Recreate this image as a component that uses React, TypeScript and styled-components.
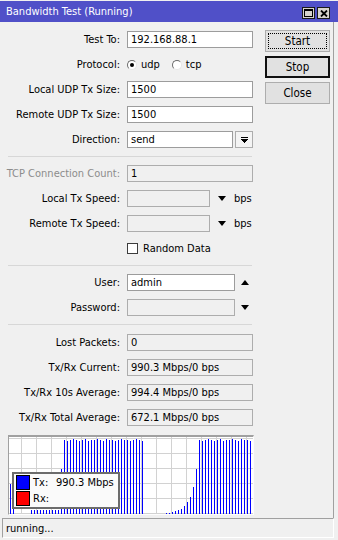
import React from 'react';
import styled, { createGlobalStyle } from 'styled-components';

const FONT = `"DejaVu Sans Condensed", "Liberation Sans Narrow", "Liberation Sans", Arial, sans-serif`;

const Global = createGlobalStyle`
  html, body { margin: 0; padding: 0; background: #f0f0f0; }
  body { font-family: ${FONT}; font-size: 11px; color: #000; }
  * { box-sizing: border-box; }
`;

const Window = styled.div`
  width: 338px;
  height: 540px;
  display: flex;
  flex-direction: column;
  background: #f0f0f0;
  overflow: hidden;
`;

const TitleBar = styled.div`
  margin-top: 1px;
  height: 21px;
  background: #5050c8;
  display: flex;
  align-items: center;
  padding: 0 8px 0 6px;
  color: #fff;
`;

const Title = styled.div`
  flex: 1;
  font-size: 11px;
  padding-bottom: 1px;
`;

const TitleBtns = styled.div`
  display: flex;
  gap: 2px;
  align-self: flex-end;
  margin-bottom: 3px;
`;

const TitleBtn = styled.div`
  width: 13px;
  height: 12px;
  background: #d6d3cc;
  border: 1px solid #1a1a1a;
  display: flex;
  align-items: center;
  justify-content: center;
`;

const Body = styled.div`
  width: 334px;
  flex: 1;
  border-right: 1px solid #a0a0a0;
  display: flex;
  flex-direction: column;
`;

const Main = styled.div`
  display: flex;
  padding-top: 8px;
`;

const FormCol = styled.div`
  width: 253px;
  padding-top: 1px;
  display: flex;
  flex-direction: column;
`;

const ButtonCol = styled.div`
  margin-left: 12px;
  width: 65px;
  display: flex;
  flex-direction: column;
  gap: 4px;
`;

const Button = styled.div<{ $variant?: 'focus' | 'default' | 'plain' }>`
  position: relative;
  height: 22px;
  background: #e1e1e1;
  border: ${(p) => (p.$variant === 'default' ? '2px solid #111' : '1px solid #adadad')};
  display: flex;
  align-items: center;
  justify-content: center;
  font-size: 11.5px;
  &::after {
    content: '';
    display: ${(p) => (p.$variant === 'focus' ? 'block' : 'none')};
    position: absolute;
    inset: 2px;
    border: 1px dotted #000;
  }
`;

const Row = styled.div<{ $gap?: number }>`
  display: grid;
  grid-template-columns: 120px 126px;
  column-gap: 7px;
  align-items: center;
  height: 17px;
  margin-bottom: ${(p) => p.$gap ?? 8}px;
`;

const Label = styled.div<{ $disabled?: boolean }>`
  text-align: right;
  white-space: nowrap;
  color: ${(p) => (p.$disabled ? '#8c8c8c' : '#000')};
`;

const Field = styled.div`
  display: flex;
  align-items: center;
  height: 17px;
`;

const Input = styled.div<{ $disabled?: boolean; $w?: number }>`
  height: 17px;
  width: ${(p) => (p.$w ? `${p.$w}px` : '100%')};
  border: 1px solid ${(p) => (p.$disabled ? '#adadad' : '#9c9c9c')};
  background: ${(p) => (p.$disabled ? '#f0f0f0' : '#fff')};
  padding: 0 3px;
  display: flex;
  align-items: center;
  white-space: nowrap;
  overflow: hidden;
`;

const DropBtn = styled.div`
  margin-left: 2px;
  width: 18px;
  height: 17px;
  border: 1px solid #adadad;
  background: #f4f4f4;
  display: flex;
  align-items: center;
  justify-content: center;
`;

const Arrow = styled.div<{ $up?: boolean; $ml: number }>`
  margin-left: ${(p) => p.$ml}px;
  width: 0;
  height: 0;
  border-left: 4px solid transparent;
  border-right: 4px solid transparent;
  ${(p) => (p.$up ? 'border-bottom: 5px solid #000;' : 'border-top: 5px solid #000;')}
`;

const Unit = styled.span`
  margin-left: 8px;
`;

const RadioGroup = styled.div`
  display: flex;
  align-items: center;
  gap: 12px;
`;

const RadioOption = styled.label`
  display: flex;
  align-items: center;
  gap: 4px;
`;

const RadioDot = styled.span<{ $checked?: boolean }>`
  position: relative;
  width: 10px;
  height: 10px;
  border-radius: 50%;
  background: #fff;
  border: 1px solid;
  border-color: #6a6a6a #e6e6e6 #e6e6e6 #6a6a6a;
  &::after {
    content: '';
    display: ${(p) => (p.$checked ? 'block' : 'none')};
    position: absolute;
    left: 2px;
    top: 2px;
    width: 4px;
    height: 4px;
    border-radius: 50%;
    background: #000;
  }
`;

const CheckOption = styled.label`
  display: flex;
  align-items: center;
  gap: 5px;
`;

const CheckBox = styled.span`
  width: 11px;
  height: 11px;
  border: 1px solid #3c3c3c;
  background: #fff;
`;

const Separator = styled.div<{ $after?: number }>`
  margin-left: 8px;
  width: 244px;
  height: 1px;
  background: #d7d7d7;
  margin-bottom: ${(p) => p.$after ?? 8}px;
`;

const Graph = styled.div`
  position: relative;
  margin: 1px 0 0 8px;
  width: 246px;
  height: 80px;
  border-top: 2px solid #a0a0a0;
  border-left: 1px solid #a0a0a0;
  border-right: 1px solid #fdfdfd;
  border-bottom: 1px solid #fdfdfd;
  background: #fff;
`;

const ChartSvg = styled.svg`
  display: block;
`;

const Legend = styled.div`
  position: absolute;
  left: 3px;
  top: 35px;
  width: 108px;
  height: 37px;
  border: 2px solid #6c6c6c;
  background: #fafafa;
  padding: 1px 2px 0 2px;
  display: flex;
  flex-direction: column;
  gap: 1px;
`;

const LegendRow = styled.div`
  display: flex;
  align-items: center;
  height: 15px;
  gap: 3px;
  white-space: nowrap;
`;

const Swatch = styled.span<{ $color: string }>`
  width: 14px;
  height: 15px;
  border: 1px solid #000;
  background: ${(p) => p.$color};
`;

const LegendKey = styled.span`
  width: 20px;
`;

const StatusBar = styled.div`
  margin: 0 0 2px 2px;
  width: 332px;
  height: 20px;
  border-top: 1px solid #a0a0a0;
  border-left: 1px solid #a0a0a0;
  border-right: 1px solid #fff;
  border-bottom: 1px solid #fff;
  display: flex;
  align-items: center;
  padding-left: 3px;
`;

const Spacer = styled.div`
  flex: 1;
`;

const full = [74, 73, 74, 75, 74, 73, 74, 75, 73, 74, 74, 75, 74, 73, 75, 74, 74, 73, 74, 75, 74, 74, 73, 74, 75, 74, 73];
const ramp = [1, 1, 2, 3, 4, 5, 8, 12, 17, 27, 45];
const bars: number[] = Array.from({ length: 81 }, (_, i) => {
  if (i <= 1) return 30;
  if (i < 7) return 0;
  if (i < 17) return 4;
  if (i === 17) return 45;
  if (i <= 44) return full[(i - 18) % full.length];
  if (i < 52) return 0;
  if (i < 63) return ramp[i - 52];
  return full[(i - 63) % full.length];
});

const Chart: React.FC = () => {
  const W = 244;
  const H = 77;
  const vLines = [] as number[];
  for (let x = 12; x < W; x += 15) vLines.push(x);
  const hLines = [1, 16, 31, 46, 61, 76];
  return (
    <ChartSvg width={W} height={H} viewBox={`0 0 ${W} ${H}`} shapeRendering="crispEdges">
      {vLines.map((x) => (
        <rect key={`v${x}`} x={x} y={0} width={1} height={H} fill="#d2d2d2" />
      ))}
      {hLines.map((y) => (
        <rect key={`h${y}`} x={0} y={y} width={W} height={1} fill="#d2d2d2" />
      ))}
      {bars.map((h, i) =>
        h > 0 ? <rect key={`b${i}`} x={1 + 3 * i} y={H - h} width={1} height={h} fill="#0000ff" /> : null
      )}
    </ChartSvg>
  );
};

const MaxIcon = () => (
  <svg width="9" height="8" viewBox="0 0 9 8" shapeRendering="crispEdges">
    <rect x="0" y="0" width="9" height="8" fill="#000" />
    <rect x="1" y="2" width="7" height="5" fill="#d6d3cc" />
  </svg>
);

const CloseIcon = () => (
  <svg width="8" height="7" viewBox="0 0 8 7">
    <path d="M1 0.5 L7 6.5 M7 0.5 L1 6.5" stroke="#000" strokeWidth="1.8" />
  </svg>
);

const DropIcon = () => (
  <svg width="8" height="8" viewBox="0 0 8 8" shapeRendering="crispEdges">
    <rect x="1" y="1" width="7" height="1" fill="#000" />
    <path d="M1 3 H8 L4.5 7 Z" fill="#000" />
  </svg>
);

export default function App() {
  return (
    <>
      <Global />
      <Window>
        <TitleBar>
          <Title>Bandwidth Test (Running)</Title>
          <TitleBtns>
            <TitleBtn>
              <MaxIcon />
            </TitleBtn>
            <TitleBtn>
              <CloseIcon />
            </TitleBtn>
          </TitleBtns>
        </TitleBar>
        <Body>
          <Main>
            <FormCol>
              <Row>
                <Label>Test To:</Label>
                <Input>192.168.88.1</Input>
              </Row>
              <Row>
                <Label>Protocol:</Label>
                <RadioGroup>
                  <RadioOption>
                    <RadioDot $checked />
                    udp
                  </RadioOption>
                  <RadioOption>
                    <RadioDot />
                    tcp
                  </RadioOption>
                </RadioGroup>
              </Row>
              <Row>
                <Label>Local UDP Tx Size:</Label>
                <Input>1500</Input>
              </Row>
              <Row>
                <Label>Remote UDP Tx Size:</Label>
                <Input>1500</Input>
              </Row>
              <Row>
                <Label>Direction:</Label>
                <Field>
                  <Input $w={106}>send</Input>
                  <DropBtn>
                    <DropIcon />
                  </DropBtn>
                </Field>
              </Row>
              <Separator />
              <Row>
                <Label $disabled>TCP Connection Count:</Label>
                <Input $disabled>1</Input>
              </Row>
              <Row>
                <Label>Local Tx Speed:</Label>
                <Field>
                  <Input $disabled $w={83} />
                  <Arrow $ml={8} />
                  <Unit>bps</Unit>
                </Field>
              </Row>
              <Row>
                <Label>Remote Tx Speed:</Label>
                <Field>
                  <Input $disabled $w={83} />
                  <Arrow $ml={8} />
                  <Unit>bps</Unit>
                </Field>
              </Row>
              <Row>
                <span />
                <CheckOption>
                  <CheckBox />
                  Random Data
                </CheckOption>
              </Row>
              <Separator />
              <Row>
                <Label>User:</Label>
                <Field>
                  <Input $w={108}>admin</Input>
                  <Arrow $up $ml={6} />
                </Field>
              </Row>
              <Row>
                <Label>Password:</Label>
                <Field>
                  <Input $disabled $w={108} />
                  <Arrow $ml={6} />
                </Field>
              </Row>
              <Separator $after={9} />
              <Row>
                <Label>Lost Packets:</Label>
                <Input $disabled>0</Input>
              </Row>
              <Row>
                <Label>Tx/Rx Current:</Label>
                <Input $disabled>990.3 Mbps/0 bps</Input>
              </Row>
              <Row>
                <Label>Tx/Rx 10s Average:</Label>
                <Input $disabled>994.4 Mbps/0 bps</Input>
              </Row>
              <Row $gap={8}>
                <Label>Tx/Rx Total Average:</Label>
                <Input $disabled>672.1 Mbps/0 bps</Input>
              </Row>
            </FormCol>
            <ButtonCol>
              <Button $variant="focus">Start</Button>
              <Button $variant="default">Stop</Button>
              <Button $variant="plain">Close</Button>
            </ButtonCol>
          </Main>
          <Graph>
            <Chart />
            <Legend>
              <LegendRow>
                <Swatch $color="#0000ff" />
                <LegendKey>Tx:</LegendKey>
                <span>990.3 Mbps</span>
              </LegendRow>
              <LegendRow>
                <Swatch $color="#ff0000" />
                <LegendKey>Rx:</LegendKey>
              </LegendRow>
            </Legend>
          </Graph>
          <Spacer />
        </Body>
        <StatusBar>running...</StatusBar>
      </Window>
    </>
  );
}
